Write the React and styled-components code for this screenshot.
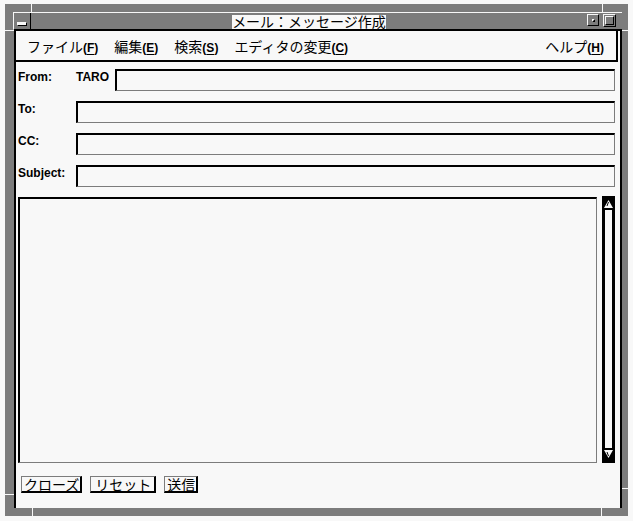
import React from "react";
import styled, { createGlobalStyle, css } from "styled-components";

const GlobalStyle = createGlobalStyle`
  html, body {
    margin: 0;
    padding: 0;
    background: #f8f8f8;
  }
  * {
    box-sizing: border-box;
  }
`;

// the 1px black/white stipple of the old mono desktop, seen as a flat mid grey
const stipple = "#7c7c7c";

const jp = `"Noto Sans CJK JP", sans-serif`;
const latin = `"Liberation Sans", "Noto Sans CJK JP", sans-serif`;

const Page = styled.div`
  padding: 4px 0 0 5px;
  width: 633px;
  height: 521px;
`;

const Window = styled.div`
  background: ${stipple};
  position: relative;
  width: 623px;
  height: 512px;
  padding: 8px 6px 8px 9px;
  display: flex;
  flex-direction: column;
`;

const Tick = styled.span`
  position: absolute;
  background: #f8f8f8;
  ${(p) =>
    p.$v
      ? css`
          width: 1px;
          height: 8px;
        `
      : css`
          height: 1px;
          width: ${p.$w}px;
        `}
`;

const TitleBar = styled.div`
  height: 19px;
  margin-left: -1px;
  border-top: 1px solid #f8f8f8;
  border-left: 1px solid #f8f8f8;
  border-bottom: 2px solid #000;
  display: flex;
  align-items: stretch;
`;

const MenuButton = styled.div`
  width: 17px;
  border-right: 1px solid #000;
  display: flex;
  align-items: flex-end;
  justify-content: center;
  padding-bottom: 3px;
`;

const MenuBarGlyph = styled.span`
  width: 10px;
  height: 4px;
  background: #f8f8f8;
  border: 1px solid #000;
  border-top-color: #f8f8f8;
  border-left-color: #f8f8f8;
`;

const TitleArea = styled.div`
  flex: 1;
  display: flex;
  justify-content: center;
  align-items: flex-end;
`;

const TitleText = styled.span`
  background: #f8f8f8;
  color: #000;
  font-family: ${jp};
  font-size: 14px;
  line-height: 13px;
  height: 14px;
  white-space: nowrap;
`;

const WinButtons = styled.div`
  display: flex;
  align-items: center;
  gap: 4px;
  padding: 0 6px 2px 0;
`;

const WinButton = styled.div`
  background: ${stipple};
  width: ${(p) => p.$size}px;
  height: ${(p) => p.$size}px;
  border: 1px solid #000;
  border-top-color: #f8f8f8;
  border-left-color: #f8f8f8;
  display: flex;
  align-items: center;
  justify-content: center;
`;

const WinGlyph = styled.span`
  width: ${(p) => p.$size}px;
  height: ${(p) => p.$size}px;
  border: 1px solid #000;
  border-top-color: #f8f8f8;
  border-left-color: #f8f8f8;
`;

const Client = styled.div`
  flex: 1;
  background: #f8f8f8;
  border-left: 2px solid #000;
  border-right: 2px solid #000;
  display: flex;
  flex-direction: column;
`;

const MenuBar = styled.nav`
  height: 31px;
  margin-right: 2px;
  border-right: 2px solid #000;
  border-bottom: 2px solid #000;
  display: flex;
  align-items: center;
  padding: 0 12px 0 11px;
  gap: 16px;
`;

const MenuItem = styled.span`
  font-family: ${jp};
  font-size: 14px;
  color: #000;
  white-space: nowrap;
  ${(p) =>
    p.$right &&
    css`
      margin-left: auto;
    `}
`;

const Mnemonic = styled.span`
  font-family: ${latin};
  font-weight: bold;
  font-size: 12px;
  u {
    text-underline-offset: 2px;
  }
`;

const Form = styled.div`
  flex: 1;
  display: flex;
  flex-direction: column;
  padding: 7px 5px 0 2px;
`;

const Fields = styled.div`
  display: flex;
  flex-direction: column;
  gap: 10px;
`;

const Row = styled.div`
  display: flex;
  align-items: flex-start;
`;

const Label = styled.label`
  width: 58px;
  padding-top: 1px;
  font-family: ${latin};
  font-weight: bold;
  font-size: 12px;
  line-height: 14px;
  color: #000;
`;

const Value = styled.span`
  width: 39px;
  padding-top: 1px;
  font-family: ${latin};
  font-weight: bold;
  font-size: 12px;
  line-height: 14px;
  color: #000;
`;

const sunken = css`
  background: #f8f8f8;
  border-top: 2px solid #000;
  border-left: 2px solid #000;
  border-right: 1px solid ${stipple};
  border-bottom: 1px solid ${stipple};
  outline: none;
  margin: 0;
  padding: 2px 4px;
  font-family: ${jp};
  font-size: 14px;
  border-radius: 0;
`;

const Field = styled.input`
  ${sunken};
  flex: 1;
  min-width: 0;
  height: 22px;
`;

const Editor = styled.div`
  margin-top: 10px;
  height: 266px;
  display: flex;
  gap: 5px;
`;

const TextArea = styled.textarea`
  ${sunken};
  flex: 1;
  resize: none;
`;

const Scrollbar = styled.div`
  width: 13px;
  margin-top: -1px;
  display: flex;
  flex-direction: column;
`;

const Arrow = styled.div`
  height: ${(p) => p.$h}px;
  background: #000;
  display: flex;
  justify-content: center;
  align-items: ${(p) => (p.$down ? "flex-start" : "flex-end")};
  padding: 2px 0;
`;

const Trough = styled.div`
  flex: 1;
  background: #f8f8f8;
  border-left: 3px solid #000;
  border-right: 3px solid #000;
`;

const Buttons = styled.div`
  margin-top: 13px;
  padding-left: 3px;
  display: flex;
  gap: 8px;
`;

const Button = styled.button`
  height: 17px;
  margin: 0;
  padding: 0 ${(p) => p.$pad || 1}px 0 ${(p) => (p.$pad || 1) + 1}px;
  background: #f8f8f8;
  border: none;
  border-top: 1px solid ${stipple};
  border-left: 1px solid ${stipple};
  border-right: 2px solid #000;
  border-bottom: 2px solid #000;
  border-radius: 0;
  font-family: ${jp};
  font-size: 14px;
  line-height: 14px;
  color: #000;
  cursor: pointer;
`;

const menus = [
  ["ファイル", "F"],
  ["編集", "E"],
  ["検索", "S"],
  ["エディタの変更", "C"],
];

const fields = [{ label: "To:" }, { label: "CC:" }, { label: "Subject:" }];

const ticks = [
  { $v: true, left: 26, top: 0 },
  { $v: true, left: 597, top: 0 },
  { $v: true, left: 27, top: 504 },
  { $v: true, left: 596, top: 504 },
  { $w: 9, left: 0, top: 26 },
  { $w: 6, left: 617, top: 26 },
  { $w: 9, left: 0, top: 490 },
  { $w: 6, left: 617, top: 484 },
];

const UpIcon = () => (
  <svg width="9" height="8" viewBox="0 0 9 8">
    <polygon points="4.5,0 9,8 0,8" fill="#f8f8f8" />
    <line x1="4.5" y1="2" x2="3" y2="6" stroke="#000" strokeWidth="1" />
  </svg>
);

const DownIcon = () => (
  <svg width="9" height="8" viewBox="0 0 9 8">
    <polygon points="0,0 9,0 4.5,8" fill="#f8f8f8" />
    <line x1="4.5" y1="6" x2="3" y2="2" stroke="#000" strokeWidth="1" />
  </svg>
);

const MenuLabel = ({ text, letter, right }) => (
  <MenuItem $right={right}>
    {text}
    <Mnemonic>
      (<u>{letter}</u>)
    </Mnemonic>
  </MenuItem>
);

export default function App() {
  return (
    <Page>
      <GlobalStyle />
      <Window>
        {ticks.map(({ left, top, ...rest }, i) => (
          <Tick key={i} {...rest} style={{ left, top }} />
        ))}
        <TitleBar>
          <MenuButton>
            <MenuBarGlyph />
          </MenuButton>
          <TitleArea>
            <TitleText>メール：メッセージ作成</TitleText>
          </TitleArea>
          <WinButtons>
            <WinButton $size={12}>
              <WinGlyph $size={3} />
            </WinButton>
            <WinButton $size={13}>
              <WinGlyph $size={9} />
            </WinButton>
          </WinButtons>
        </TitleBar>
        <Client>
          <MenuBar>
            {menus.map(([text, letter]) => (
              <MenuLabel key={letter} text={text} letter={letter} />
            ))}
            <MenuLabel text="ヘルプ" letter="H" right />
          </MenuBar>
          <Form>
            <Fields>
              <Row>
                <Label>From:</Label>
                <Value>TARO</Value>
                <Field />
              </Row>
              {fields.map((f) => (
                <Row key={f.label}>
                  <Label>{f.label}</Label>
                  <Field />
                </Row>
              ))}
            </Fields>
            <Editor>
              <TextArea />
              <Scrollbar>
                <Arrow $h={14}>
                  <UpIcon />
                </Arrow>
                <Trough />
                <Arrow $h={15} $down>
                  <DownIcon />
                </Arrow>
              </Scrollbar>
            </Editor>
            <Buttons>
              <Button>クローズ</Button>
              <Button $pad={3}>リセット</Button>
              <Button>送信</Button>
            </Buttons>
          </Form>
        </Client>
      </Window>
    </Page>
  );
}
